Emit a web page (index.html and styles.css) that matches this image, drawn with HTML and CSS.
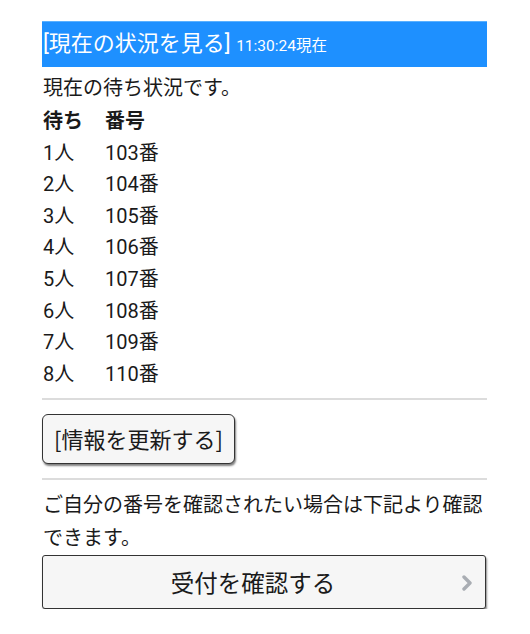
FILE: index.html
```html
<!DOCTYPE html>
<html lang="ja">
<head>
    <meta charset="UTF-8">
    <meta name="viewport" content="width=device-width, initial-scale=1.0">
    <title>現在の状況</title>
    <link rel="stylesheet" href="styles.css">
</head>
<body>
    <div class="page">
        <h2 class="status-title">[現在の状況を見る] <span class="time">11:30:24現在</span></h2>
        <p class="lead">現在の待ち状況です。</p>
        <div class="queue">
            <div class="queue-head">待ち</div>
            <div class="queue-head">番号</div>
            <div>1人</div><div>103番</div>
            <div>2人</div><div>104番</div>
            <div>3人</div><div>105番</div>
            <div>4人</div><div>106番</div>
            <div>5人</div><div>107番</div>
            <div>6人</div><div>108番</div>
            <div>7人</div><div>109番</div>
            <div>8人</div><div>110番</div>
        </div>
        <hr class="divider">
        <button class="refresh-button">[情報を更新する]</button>
        <hr class="divider">
        <p class="note">ご自分の番号を確認されたい場合は下記より確認できます。</p>
        <a href="#" class="confirm-button">
            <span>受付を確認する</span>
            <svg class="arrow" width="12" height="16" viewBox="0 0 12 16">
                <path d="M3 2 L9 8 L3 14" fill="none" stroke="#a9adb3" stroke-width="3.4" stroke-linecap="round" stroke-linejoin="round"/>
            </svg>
        </a>
    </div>
</body>
</html>
```

FILE: styles.css
```css
body {
    font-family: "Roboto", "Noto Sans CJK JP", sans-serif;
    background-color: #fff;
    color: #1a1a1a;
    margin: 0;
    padding: 0;
}
.page {
    padding: 21px 43px 0 42px;
}
.status-title {
    background-color: #1e90ff;
    border-top: 1px solid #5ab0ff;
    color: white;
    font-size: 22px;
    font-weight: normal;
    height: 45px;
    line-height: 44px;
    margin: 0;
    padding-left: 1px;
}
.status-title .time {
    font-size: 15.5px;
}
.lead {
    font-size: 20px;
    line-height: 33px;
    margin: 5px 0 0 1px;
}
.queue {
    display: grid;
    grid-template-columns: 62px 1fr;
    font-size: 20px;
    line-height: 31.6px;
    padding-left: 1px;
    padding-top: 1px;
}
.queue-head {
    font-weight: bold;
}
.divider {
    border: none;
    border-top: 2px solid #dcdcdc;
    margin: 8px 0 0 0;
}
.refresh-button {
    display: block;
    font-family: "Noto Sans CJK JP", sans-serif;
    font-size: 22px;
    color: #1a1a1a;
    background-color: #f6f6f6;
    border: 1px solid #333;
    border-radius: 6px;
    box-shadow: 1px 2px 2px rgba(0, 0, 0, 0.5);
    width: 193px;
    height: 50px;
    padding: 0 0 2px 0;
    margin: 14px 0 14px 0;
}
.refresh-button + .divider {
    margin-top: 0;
}
.note {
    font-size: 20px;
    line-height: 33px;
    margin: 9px 0 0 1px;
}
.confirm-button {
    display: flex;
    align-items: center;
    justify-content: center;
    position: relative;
    box-sizing: border-box;
    width: 444px;
    height: 54px;
    padding-right: 22px;
    background-color: #f6f6f6;
    border: 1px solid #333;
    border-radius: 3px;
    box-shadow: 1px 2px 2px rgba(0, 0, 0, 0.45);
    color: #1a1a1a;
    font-size: 23.5px;
    text-decoration: none;
}
.confirm-button .arrow {
    position: absolute;
    right: 12px;
    top: 19px;
}
```
